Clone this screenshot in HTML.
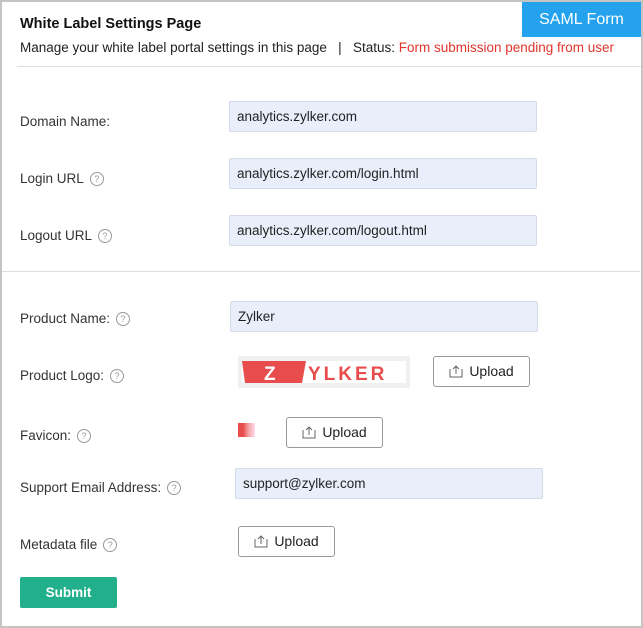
<!DOCTYPE html>
<html><head><style>
body{margin:0;width:643px;height:628px;font-family:"Liberation Sans",sans-serif;background:#fff;position:relative;overflow:hidden}
.frame{position:absolute;left:0;top:0;width:639px;height:624px;border:2px solid #c4c4c4}
.a{position:absolute;white-space:nowrap}
.lbl{font-size:13.5px;color:#333}
.q{display:inline-block;width:12px;height:12px;border:1px solid #999;border-radius:50%;font-size:9px;color:#999;text-align:center;line-height:12px;vertical-align:middle;margin-left:6px}
.in{position:absolute;background:#e8effb;border:1px solid #d4dbe8;border-radius:2px;font-size:13.5px;color:#222;line-height:30px;padding-left:7px;box-sizing:border-box;height:31px}
.btn{position:absolute;border:1px solid #999;border-radius:3px;font-size:14px;color:#222;box-sizing:border-box;height:31px;line-height:29px;text-align:center;background:#fff}
.ic{display:inline-block;vertical-align:-2px;margin-right:6px}
</style></head><body>
<div class="frame"></div>
<div class="a" style="left:522px;top:2px;width:119px;height:35px;background:#24a2ee;color:#fff;font-size:16px;line-height:35px;text-align:center">SAML Form</div>
<div class="a" style="left:20px;top:16px;font-size:14.5px;font-weight:bold;color:#111">White Label Settings Page</div>
<div class="a" style="left:20px;top:40px;font-size:13.5px;color:#222">Manage your white label portal settings in this page &nbsp;&nbsp;| &nbsp;&nbsp;Status: <span style="color:#e0362c">Form submission pending from user</span></div>
<div class="a" style="left:17px;top:66px;width:624px;height:1px;background:#ddd"></div>
<div class="a" style="left:2px;top:271px;width:638px;height:1px;background:#ddd"></div>

<div class="a lbl" style="left:20px;top:114px">Domain Name:</div>
<div class="in" style="left:229px;top:101px;width:308px">analytics.zylker.com</div>
<div class="a lbl" style="left:20px;top:171px">Login URL<span class="q">?</span></div>
<div class="in" style="left:229px;top:158px;width:308px">analytics.zylker.com/login.html</div>
<div class="a lbl" style="left:20px;top:228px">Logout URL<span class="q">?</span></div>
<div class="in" style="left:229px;top:215px;width:308px">analytics.zylker.com/logout.html</div>

<div class="a lbl" style="left:20px;top:311px">Product Name:<span class="q">?</span></div>
<div class="in" style="left:230px;top:301px;width:308px">Zylker</div>
<div class="a lbl" style="left:20px;top:368px">Product Logo:<span class="q">?</span></div>
<div class="a" style="left:238px;top:356px;width:172px;height:32px;background:#f0f0f0">
<svg width="172" height="32"><rect x="4" y="5" width="164" height="22" fill="#fff"/><polygon points="4,5 68,5 64,27 7,27" fill="#e84c4c"/><text x="26" y="24" font-family="Liberation Sans" font-weight="bold" font-size="19" fill="#fff">Z</text><text x="70" y="24" font-family="Liberation Sans" font-weight="bold" font-size="19" fill="#e84c4c" letter-spacing="3">YLKER</text></svg></div>
<div class="btn" style="left:433px;top:356px;width:97px"><svg class="ic" width="14" height="14"><path d="M1 5v8h12V5M7 10V2M4 5l3-3 3 3" fill="none" stroke="#666"/></svg>Upload</div>
<div class="a lbl" style="left:20px;top:428px">Favicon:<span class="q">?</span></div>
<div class="a" style="left:238px;top:423px;width:17px;height:14px;background:linear-gradient(90deg,#e84c4c 30%,#f4a0a0 60%,#fde 100%)"></div>
<div class="btn" style="left:286px;top:417px;width:97px"><svg class="ic" width="14" height="14"><path d="M1 5v8h12V5M7 10V2M4 5l3-3 3 3" fill="none" stroke="#666"/></svg>Upload</div>
<div class="a lbl" style="left:20px;top:480px">Support Email Address:<span class="q">?</span></div>
<div class="in" style="left:235px;top:468px;width:308px">support@zylker.com</div>
<div class="a lbl" style="left:20px;top:537px">Metadata file<span class="q">?</span></div>
<div class="btn" style="left:238px;top:526px;width:97px"><svg class="ic" width="14" height="14"><path d="M1 5v8h12V5M7 10V2M4 5l3-3 3 3" fill="none" stroke="#666"/></svg>Upload</div>
<div class="a" style="left:20px;top:577px;width:97px;height:31px;background:#22b08c;border-radius:2px;color:#fff;font-size:13.5px;font-weight:bold;line-height:31px;text-align:center">Submit</div>
</body></html>
